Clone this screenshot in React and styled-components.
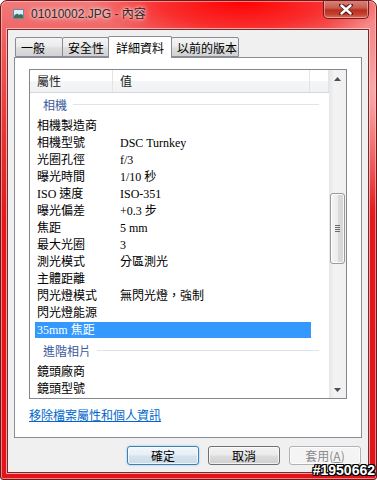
import React from "react";
import styled, { createGlobalStyle } from "styled-components";

const GlobalStyle = createGlobalStyle`
  html, body {
    margin: 0;
    padding: 0;
    background: #ffffff;
  }
  body {
    font-family: "Noto Sans CJK TC", "Liberation Sans", sans-serif;
  }
`;

const rows = [
  { type: "group", label: "相機" },
  { label: "相機製造商", value: "" },
  { label: "相機型號", value: "DSC Turnkey" },
  { label: "光圈孔徑", value: "f/3" },
  { label: "曝光時間", value: "1/10 秒" },
  { label: "ISO 速度", value: "ISO-351" },
  { label: "曝光偏差", value: "+0.3 步" },
  { label: "焦距", value: "5 mm" },
  { label: "最大光圈", value: "3" },
  { label: "測光模式", value: "分區測光" },
  { label: "主體距離", value: "" },
  { label: "閃光燈模式", value: "無閃光燈，強制" },
  { label: "閃光燈能源", value: "" },
  { label: "35mm 焦距", value: "", selected: true },
  { type: "group", label: "進階相片" },
  { label: "鏡頭廠商", value: "" },
  { label: "鏡頭型號", value: "" },
];

const tabs = [
  { label: "一般", w: 48 },
  { label: "安全性", w: 47 },
  { label: "詳細資料", w: 64, active: true },
  { label: "以前的版本", w: 68 },
];

const App = () => {
  return (
    <>
      <GlobalStyle />
      <Window>
        <TitleBar>
          <AppIcon viewBox="0 0 11 10" width="11" height="10">
            <rect x="0.5" y="0.5" width="10" height="9" fill="#a9d3ec" stroke="#6f8aa0" />
            <rect x="1" y="1" width="9" height="4" fill="#d8eefa" />
            <path d="M1 7 L4 4.5 L6 6 L8 5 L10 6.5 L10 9 L1 9 Z" fill="#3d6e5a" />
          </AppIcon>
          <Title>01010002.JPG - 內容</Title>
          <CloseButton>
            <svg width="14" height="11" viewBox="0 0 14 11">
              <path
                d="M2 1 L7 4.5 L12 1 M2 10 L7 6.5 L12 10 M2 1 L12 10 M12 1 L2 10"
                stroke="#5a1a1a"
                strokeWidth="4"
                strokeLinecap="round"
                fill="none"
              />
              <path
                d="M2.5 1.5 L11.5 9.5 M11.5 1.5 L2.5 9.5"
                stroke="#ffffff"
                strokeWidth="2.4"
                strokeLinecap="round"
                fill="none"
              />
            </svg>
          </CloseButton>
        </TitleBar>
        <Client>
          <TabRow>
            {tabs.map((t) => (
              <Tab key={t.label} $w={t.w} $active={t.active}>
                {t.label}
              </Tab>
            ))}
          </TabRow>
          <Panel>
            <ListBox>
              <ListMain>
                <Header>
                  <HeaderCell $w={83}>屬性</HeaderCell>
                  <HeaderCell $w={197}>值</HeaderCell>
                  <HeaderCell $w={19} />
                </Header>
                {rows.map((r, i) =>
                  r.type === "group" ? (
                    <Group key={i}>
                      <GroupLabel>{r.label}</GroupLabel>
                      <GroupLine />
                    </Group>
                  ) : (
                    <Row key={i} $selected={r.selected}>
                      <Cell $w={78}>{r.label}</Cell>
                      <Cell $w={198} $pad={7}>
                        {r.value}
                      </Cell>
                    </Row>
                  )
                )}
              </ListMain>
              <ScrollBar>
                <ArrowBox>
                  <svg width="7" height="4" viewBox="0 0 7 4">
                    <path d="M0 4 L3.5 0 L7 4 Z" fill="#4e4e4e" />
                  </svg>
                </ArrowBox>
                <Track>
                  <Thumb>
                    <Grip>
                      <i />
                      <i />
                      <i />
                      <i />
                    </Grip>
                  </Thumb>
                </Track>
                <ArrowBox>
                  <svg width="7" height="4" viewBox="0 0 7 4">
                    <path d="M0 0 L3.5 4 L7 0 Z" fill="#4e4e4e" />
                  </svg>
                </ArrowBox>
              </ScrollBar>
            </ListBox>
            <RemoveLink href="#">移除檔案屬性和個人資訊</RemoveLink>
          </Panel>
          <ButtonRow>
            <Button $variant="default">確定</Button>
            <Button>取消</Button>
            <Button $variant="disabled">
              套用(<u>A</u>)
            </Button>
          </ButtonRow>
        </Client>
        <Watermark>#1950662</Watermark>
      </Window>
    </>
  );
};

export default App;

const Window = styled.div`
  position: relative;
  width: 377px;
  height: 480px;
  box-sizing: border-box;
  border: 1px solid #6a1a1a;
  border-radius: 7px 7px 3px 3px;
  display: flex;
  flex-direction: column;
  padding: 0 7px 6px 6px;
  background:
    radial-gradient(ellipse 150px 45px at 240px 0px, #ff0000 0%, rgba(255, 0, 0, 0.6) 55%, rgba(255, 0, 0, 0) 100%),
    radial-gradient(ellipse 60px 120px at 376px 90px, rgba(255, 190, 190, 0.85) 0%, rgba(255, 190, 190, 0) 100%),
    linear-gradient(to bottom, #f27a7a 0px, #ee5f5f 40px, #e83434 130px, #e3181c 220px, #e0141a 100%);
  box-shadow: inset 0 0 0 1px rgba(255, 200, 200, 0.6);
  overflow: hidden;
`;

const TitleBar = styled.div`
  height: 28px;
  display: flex;
  align-items: flex-start;
  position: relative;
`;

const AppIcon = styled.svg`
  margin: 8px 0 0 6px;
  flex: none;
`;

const Title = styled.div`
  margin: 6px 0 0 7px;
  font-family: "Liberation Sans", "Noto Sans CJK TC", sans-serif;
  font-size: 12px;
  line-height: 14px;
  color: #2a2a2a;
  text-shadow: 0 0 6px rgba(255, 255, 255, 0.9), 0 0 3px rgba(255, 255, 255, 0.8);
`;

const CloseButton = styled.div`
  position: absolute;
  top: -1px;
  right: 0px;
  width: 46px;
  height: 19px;
  box-sizing: border-box;
  border: 1px solid #6b2020;
  border-top: none;
  border-radius: 0 0 5px 5px;
  background: linear-gradient(to bottom, #d88a80 0%, #c85a50 45%, #b8301f 55%, #c64030 80%, #e0705a 100%);
  box-shadow: inset 0 0 0 1px rgba(255, 210, 200, 0.5);
  display: flex;
  align-items: center;
  justify-content: center;
`;

const Client = styled.div`
  flex: 1;
  display: flex;
  flex-direction: column;
  background: #f0f0f0;
  border: 1px solid #7a2a2a;
  box-shadow: 0 0 0 1px rgba(255, 215, 215, 0.7);
  padding: 6px 6px 6px 6px;
`;

const TabRow = styled.div`
  display: flex;
  align-items: flex-end;
  padding-left: 2px;
  height: 21px;
  position: relative;
  z-index: 2;
`;

const Tab = styled.div`
  box-sizing: border-box;
  width: ${(p) => p.$w}px;
  height: ${(p) => (p.$active ? 22 : 20)}px;
  margin-left: -1px;
  margin-bottom: ${(p) => (p.$active ? -1 : 0)}px;
  padding: 0 ${(p) => (p.$active ? 7 : 5)}px;
  border: 1px solid #898c95;
  border-bottom: ${(p) => (p.$active ? "none" : "1px solid #898c95")};
  border-radius: 2px 2px 0 0;
  background: ${(p) =>
    p.$active
      ? "#ffffff"
      : "linear-gradient(to bottom, #f4f4f4 0%, #ececec 45%, #dedede 55%, #d2d2d2 100%)"};
  position: relative;
  z-index: ${(p) => (p.$active ? 2 : 1)};
  font-size: 12px;
  line-height: 18px;
  color: #000;
  white-space: nowrap;
  display: flex;
  align-items: center;
  padding-top: ${(p) => (p.$active ? 0 : 1)}px;
`;

const Panel = styled.div`
  flex: none;
  height: 381px;
  box-sizing: border-box;
  background: #ffffff;
  border: 1px solid #898c95;
  padding: 11px 14px 0 14px;
  display: flex;
  flex-direction: column;
  align-items: flex-start;
`;

const ListBox = styled.div`
  width: 318px;
  height: 330px;
  box-sizing: border-box;
  border: 1px solid #828790;
  display: flex;
  overflow: hidden;
  background: #ffffff;
`;

const ListMain = styled.div`
  flex: 1;
  display: flex;
  flex-direction: column;
  overflow: hidden;
  font-family: "Liberation Serif", "Noto Sans CJK TC", serif;
  font-size: 12px;
  color: #000;
`;

const Header = styled.div`
  display: flex;
  height: 23px;
  flex: none;
  background: linear-gradient(to bottom, #ffffff 0%, #ffffff 50%, #f4f5f7 51%, #f1f2f4 100%);
  border-bottom: 1px solid #d5d8dd;
  box-sizing: border-box;
`;

const HeaderCell = styled.div`
  width: ${(p) => p.$w}px;
  flex: none;
  box-sizing: border-box;
  padding-left: 7px;
  border-right: 1px solid #e1e4e9;
  display: flex;
  align-items: center;
  font-family: "Noto Sans CJK TC", sans-serif;
  font-size: 12px;
  line-height: 14px;
  color: #1a1a1a;
`;

const Group = styled.div`
  height: 25px;
  flex: none;
  display: flex;
  align-items: center;
  padding: 0 10px 2px 13px;
  box-sizing: border-box;
`;

const GroupLabel = styled.span`
  font-family: "Noto Sans CJK TC", sans-serif;
  font-size: 12px;
  line-height: 14px;
  color: #3b5a9b;
`;

const GroupLine = styled.div`
  flex: 1;
  height: 1px;
  margin-left: 6px;
  background: #dfe4ec;
`;

const Row = styled.div`
  height: 17px;
  flex: none;
  display: flex;
  align-items: center;
  margin-left: 5px;
  width: 276px;
  background: ${(p) => (p.$selected ? "#3399ff" : "transparent")};
  color: ${(p) => (p.$selected ? "#ffffff" : "#000000")};
  box-sizing: border-box;
  border-bottom: 1px solid #ffffff;
`;

const Cell = styled.div`
  width: ${(p) => p.$w}px;
  flex: none;
  box-sizing: border-box;
  padding-left: ${(p) => p.$pad || 2}px;
  white-space: nowrap;
  line-height: 16px;
`;

const ScrollBar = styled.div`
  width: 17px;
  flex: none;
  display: flex;
  flex-direction: column;
  background: linear-gradient(to right, #e6e6e6 0%, #f3f3f3 30%, #f0f0f0 100%);
`;

const ArrowBox = styled.div`
  height: 17px;
  flex: none;
  display: flex;
  align-items: center;
  justify-content: center;
`;

const Track = styled.div`
  flex: 1;
  padding-top: 106px;
  display: flex;
  justify-content: center;
`;

const Thumb = styled.div`
  width: 15px;
  height: 71px;
  box-sizing: border-box;
  border: 1px solid #9a9a9a;
  border-radius: 3px;
  background: linear-gradient(to right, #f5f5f5 0%, #ececec 50%, #dadada 55%, #d6d6d6 100%);
  box-shadow: inset 0 0 0 1px rgba(255, 255, 255, 0.8);
  display: flex;
  align-items: center;
  justify-content: center;
`;

const Grip = styled.div`
  display: flex;
  flex-direction: column;
  gap: 1px;

  > i {
    display: block;
    width: 5px;
    height: 1px;
    background: #6b6b6b;
  }
`;

const RemoveLink = styled.a`
  margin-top: 9px;
  font-family: "Noto Sans CJK TC", sans-serif;
  font-size: 12px;
  line-height: 14px;
  color: #0066cc;
  text-decoration: underline;
`;

const ButtonRow = styled.div`
  display: flex;
  justify-content: flex-end;
  gap: 9px;
  padding: 8px 1px 0 0;
`;

const Button = styled.div`
  width: 72px;
  height: 19px;
  box-sizing: border-box;
  border-radius: 3px;
  display: flex;
  align-items: center;
  justify-content: center;
  font-family: "Noto Sans CJK TC", sans-serif;
  font-size: 12px;
  line-height: 14px;
  border: 1px solid
    ${(p) =>
      p.$variant === "default" ? "#3c7fb1" : p.$variant === "disabled" ? "#adb2b5" : "#707070"};
  color: ${(p) => (p.$variant === "disabled" ? "#8a8a8a" : "#000")};
  background: ${(p) =>
    p.$variant === "default"
      ? "linear-gradient(to bottom, #f2f7fb 0%, #e6eef5 48%, #d5e3ee 52%, #cadbe9 100%)"
      : p.$variant === "disabled"
      ? "#f4f4f4"
      : "linear-gradient(to bottom, #f2f2f2 0%, #ebebeb 48%, #dddddd 52%, #cfcfcf 100%)"};
  box-shadow: ${(p) =>
    p.$variant === "default"
      ? "inset 0 0 0 1px rgba(255,255,255,0.7), 0 0 2px #7fb9e6"
      : "inset 0 0 0 1px rgba(255,255,255,0.7)"};

  u {
    text-decoration: underline;
  }
`;

const Watermark = styled.div`
  position: absolute;
  right: 1px;
  bottom: 1px;
  font-family: "Liberation Sans", sans-serif;
  font-weight: bold;
  font-size: 14px;
  line-height: 15px;
  color: #ffffff;
  text-shadow: -1px -1px 0 #000, 1px -1px 0 #000, -1px 1px 0 #000, 1px 1px 0 #000, 0 1px 0 #000, 0 -1px 0 #000,
    1px 0 0 #000, -1px 0 0 #000;
`;
